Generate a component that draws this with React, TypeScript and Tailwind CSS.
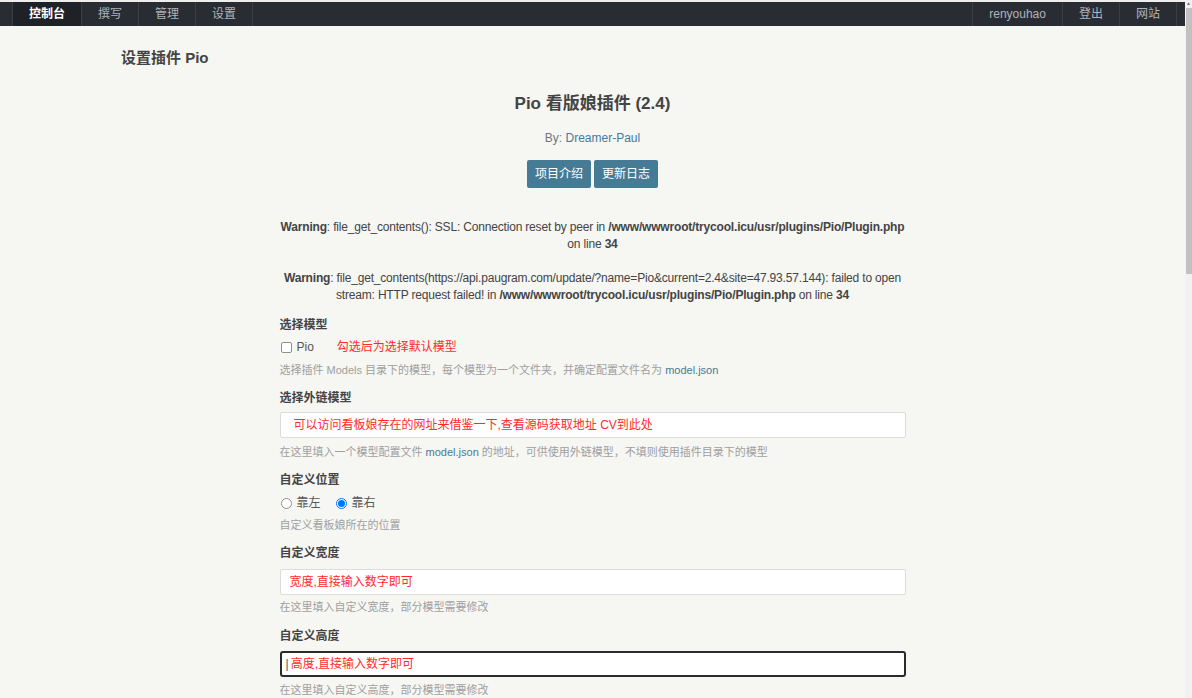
import React from 'react';

const font = "font-['Liberation_Sans','Noto_Sans_CJK_SC',sans-serif]";

const NavItem = ({ label, active }: { label: string; active?: boolean }) => (
  <div
    className={`h-full flex items-center px-4 border-r border-[#3a3e45] text-[12px] ${
      active ? 'bg-[#1e2125] text-white font-bold' : 'text-[#b0b3b8]'
    }`}
  >
    {label}
  </div>
);

const Label = ({ children, className = '' }: { children: React.ReactNode; className?: string }) => (
  <div className={`text-[12px] leading-[18px] font-bold text-[#444] ${className}`}>{children}</div>
);

const Desc = ({ children, className = '' }: { children: React.ReactNode; className?: string }) => (
  <div className={`text-[11px] leading-[16px] text-[#a0a0a0] ${className}`}>{children}</div>
);

const App = () => {
  return (
    <div className={`w-[1192px] h-[698px] overflow-hidden flex bg-[#f6f6f3] ${font}`}>
      <div className="flex-1 flex flex-col">
        <div className="h-[2px] bg-[#eeeeee]" />
        {/* top nav */}
        <div className="h-[24px] bg-[#292d33] flex justify-between pl-3 pr-2">
          <div className="flex h-full border-l border-[#3a3e45]">
            <NavItem label="控制台" active />
            <NavItem label="撰写" />
            <NavItem label="管理" />
            <NavItem label="设置" />
          </div>
          <div className="flex h-full border-l border-[#3a3e45]">
            <NavItem label="renyouhao" />
            <NavItem label="登出" />
            <NavItem label="网站" />
          </div>
        </div>

        <div className="pl-[121px] mt-[22px] h-[20px] leading-[20px] text-[15px] font-bold text-[#444]">
          设置插件 Pio
        </div>

        <div className="w-[626px] mx-auto flex flex-col">
          <div className="mt-[24px] text-center text-[17px] leading-[24px] font-bold text-[#444]">
            Pio 看版娘插件 (2.4)
          </div>
          <div className="mt-[14px] text-center text-[12px] leading-[16px] text-[#777]">
            By: <span className="text-[#467b96]">Dreamer-Paul</span>
          </div>
          <div className="mt-[14px] flex justify-center gap-[3px]">
            <button className="h-[28px] px-2 bg-[#467b96] text-white text-[12px] rounded-[2px]">项目介绍</button>
            <button className="h-[28px] px-2 bg-[#467b96] text-white text-[12px] rounded-[2px]">更新日志</button>
          </div>

          <div className="mt-[31px] -mx-2 text-center text-[12px] leading-[17px] text-[#444] tracking-[-0.18px] whitespace-nowrap">
            <b>Warning</b>: file_get_contents(): SSL: Connection reset by peer in{' '}
            <b>/www/wwwroot/trycool.icu/usr/plugins/Pio/Plugin.php</b>
            <br />
            on line <b>34</b>
          </div>
          <div className="mt-[17px] -mx-2 text-center text-[12px] leading-[17px] text-[#444] tracking-[-0.18px] whitespace-nowrap">
            <b>Warning</b>:
            file_get_contents(https://api.paugram.com/update/?name=Pio&amp;current=2.4&amp;site=47.93.57.144):
            failed to open
            <br />
            stream: HTTP request failed! in{' '}
            <b>/www/wwwroot/trycool.icu/usr/plugins/Pio/Plugin.php</b> on line <b>34</b>
          </div>

          <Label className="mt-[12px]">选择模型</Label>
          <div className="mt-[4px] h-[18px] flex items-center text-[12px]">
            <span className="ml-[1px] w-[11px] h-[11px] border border-[#8f8f8f] rounded-[2px] bg-white" />
            <span className="ml-[5px] text-[#555]">Pio</span>
            <span className="ml-[23px] text-[#ff2b2b]">勾选后为选择默认模型</span>
          </div>
          <Desc className="mt-[6px]">
            选择插件 Models 目录下的模型，每个模型为一个文件夹，并确定配置文件名为{' '}
            <span className="text-[#467b96]">model.json</span>
          </Desc>

          <Label className="mt-[11px]">选择外链模型</Label>
          <div className="mt-[5px] h-[26px] bg-white border border-[#dcdcd8] rounded-[2px] flex items-center pl-[13px] text-[12px] text-[#ff2b2b]">
            可以访问看板娘存在的网址来借鉴一下,查看源码获取地址 CV到此处
          </div>
          <Desc className="mt-[6px]">
            在这里填入一个模型配置文件 <span className="text-[#467b96]">model.json</span>{' '}
            的地址，可供使用外链模型，不填则使用插件目录下的模型
          </Desc>

          <Label className="mt-[11px]">自定义位置</Label>
          <div className="mt-[5px] h-[18px] flex items-center text-[12px] text-[#555]">
            <span className="ml-[1px] w-[11px] h-[11px] border border-[#8f8f8f] rounded-full bg-white" />
            <span className="ml-[5px]">靠左</span>
            <span className="ml-[15px] w-[11px] h-[11px] border border-[#0075ff] rounded-full bg-white flex items-center justify-center">
              <span className="w-[7px] h-[7px] rounded-full bg-[#0075ff]" />
            </span>
            <span className="ml-[5px]">靠右</span>
          </div>
          <Desc className="mt-[5px]">自定义看板娘所在的位置</Desc>

          <Label className="mt-[11px]">自定义宽度</Label>
          <div className="mt-[7px] h-[26px] bg-white border border-[#dcdcd8] rounded-[2px] flex items-center pl-[9px] text-[12px] text-[#ff2b2b]">
            宽度,直接输入数字即可
          </div>
          <Desc className="mt-[4px]">在这里填入自定义宽度，部分模型需要修改</Desc>

          <Label className="mt-[12px]">自定义高度</Label>
          <div className="mt-[6px] h-[26px] bg-white border-2 border-[#2b2b2b] rounded-[3px] flex items-center pl-[4px] text-[12px] text-[#ff2b2b]">
            <span className="text-[#555] mr-[2px]">|</span>
            高度,直接输入数字即可
          </div>
          <Desc className="mt-[5px]">在这里填入自定义高度，部分模型需要修改</Desc>
        </div>
      </div>

      {/* scrollbar */}
      <div className="w-[7px] bg-[#f1f1f1] flex flex-col items-center">
        <div className="h-[6px] w-full flex items-center justify-center text-[5px] leading-none text-[#777]">▲</div>
        <div className="mt-[2px] w-[6px] h-[266px] bg-[#c1c1c1]" />
      </div>
    </div>
  );
};

export default App;
